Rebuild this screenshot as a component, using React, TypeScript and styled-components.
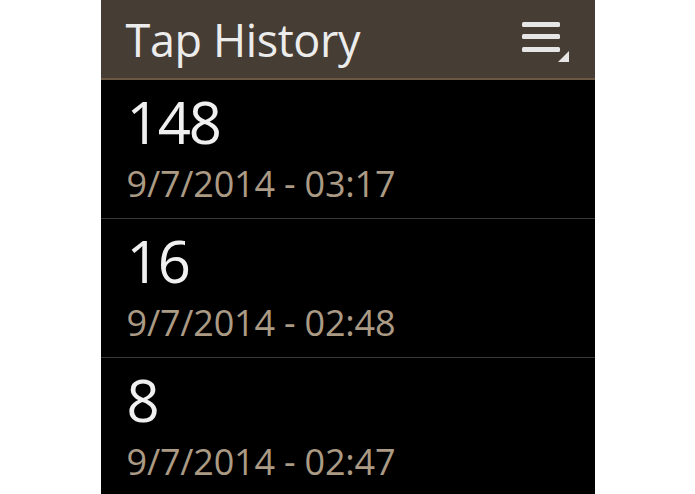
import React from "react";
import styled, { createGlobalStyle } from "styled-components";

type Tap = {
  count: number;
  when: string;
};

const taps: Tap[] = [
  { count: 148, when: "9/7/2014 - 03:17" },
  { count: 16, when: "9/7/2014 - 02:48" },
  { count: 8, when: "9/7/2014 - 02:47" },
];

const MenuIcon: React.FC = () => (
  <svg width="48" height="46" viewBox="0 0 48 46">
    <rect x="0" y="6" width="38" height="5" rx="1.5" fill="#e6e6e6" />
    <rect x="0" y="18" width="38" height="5" rx="1.5" fill="#e6e6e6" />
    <rect x="0" y="31" width="38" height="5" rx="1.5" fill="#e6e6e6" />
    <polygon points="47,35 47,46 36,46" fill="#e6e6e6" />
  </svg>
);

export default function App() {
  return (
    <>
      <GlobalStyle />
      <Page>
        <Screen>
          <Header>
            <Title>Tap History</Title>
            <MenuButton aria-label="menu">
              <MenuIcon />
            </MenuButton>
          </Header>
          <List>
            {taps.map((t, i) => (
              <Row key={i} $last={i === taps.length - 1}>
                <Count>{t.count}</Count>
                <When>{t.when}</When>
              </Row>
            ))}
          </List>
        </Screen>
      </Page>
    </>
  );
}

const GlobalStyle = createGlobalStyle`
  html, body {
    margin: 0;
    padding: 0;
    background: #ffffff;
  }
`;

const Page = styled.div`
  display: flex;
  justify-content: center;
  height: 494px;
  overflow: hidden;
`;

const Screen = styled.div`
  width: 494px;
  height: 494px;
  background: #000;
  display: flex;
  flex-direction: column;
  font-family: "Open Sans", "Noto Sans", sans-serif;
`;

const Header = styled.div`
  height: 78px;
  flex-shrink: 0;
  background: #463d35;
  border-bottom: 2px solid #6b5843;
  display: flex;
  align-items: center;
  justify-content: space-between;
  padding: 0 25px 0 25px;
`;

const Title = styled.h1`
  margin: 0;
  font-size: 45px;
  font-weight: 400;
  color: #ececec;
  letter-spacing: -0.4px;
`;

const MenuButton = styled.button`
  background: none;
  border: none;
  padding: 0;
  display: flex;
`;

const List = styled.div`
  display: flex;
  flex-direction: column;
`;

const Row = styled.div<{ $last?: boolean }>`
  height: 139px;
  flex-shrink: 0;
  box-sizing: border-box;
  padding: 12px 0 0 26px;
  border-bottom: ${(p) => (p.$last ? "none" : "1px solid #3a3836")};
  display: flex;
  flex-direction: column;
`;

const Count = styled.div`
  font-size: 58px;
  line-height: 60px;
  letter-spacing: -2px;
  color: #f0f0f0;
`;

const When = styled.div`
  margin-top: 10px;
  font-size: 36px;
  line-height: 44px;
  letter-spacing: -0.2px;
  color: #ab9a84;
`;
